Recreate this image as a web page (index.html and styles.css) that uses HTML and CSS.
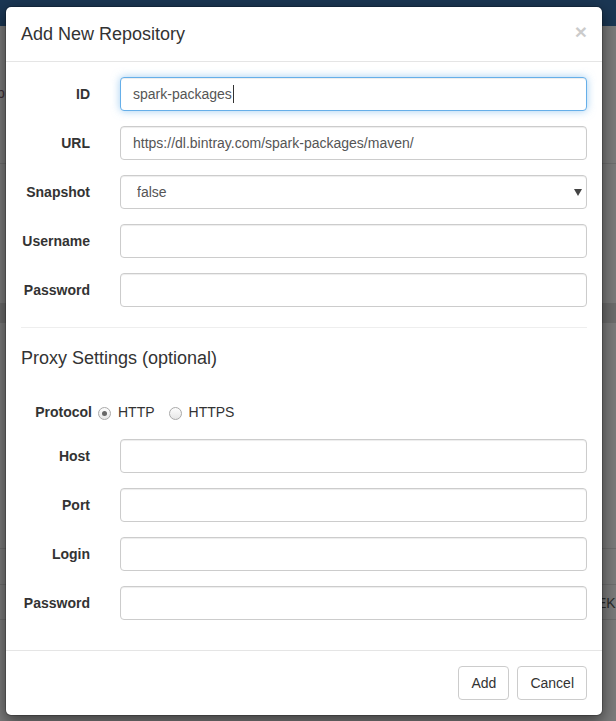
FILE: index.html
```html
<!DOCTYPE html>
<html>
<head>
<meta charset="utf-8">
<title>Add New Repository</title>
<link rel="stylesheet" href="styles.css">
</head>
<body>
<div class="backdrop">
  <div class="navbar"></div>
  <div class="bg-top"><span class="bg-p">p</span></div>
  <div class="bg-gap"></div>
  <div class="bg-band"></div>
  <div class="bg-gap2"></div>
  <div class="bg-row"></div>
  <div class="bg-row bg-row-text"><span class="bg-ek">EK</span></div>
</div>

<div class="modal">
  <div class="modal-header">
    <button class="close" type="button">×</button>
    <h4 class="modal-title">Add New Repository</h4>
  </div>
  <div class="modal-body">
    <div class="form-group">
      <label class="control-label">ID</label>
      <div class="input-wrap">
        <input class="form-control focused" type="text" value="spark-packages">
        <span class="caret"></span>
      </div>
    </div>
    <div class="form-group">
      <label class="control-label">URL</label>
      <input class="form-control" type="text" value="https://dl.bintray.com/spark-packages/maven/">
    </div>
    <div class="form-group">
      <label class="control-label">Snapshot</label>
      <div class="select-wrap">
        <select class="form-control select"><option>false</option><option>true</option></select>
      </div>
    </div>
    <div class="form-group">
      <label class="control-label">Username</label>
      <input class="form-control" type="text">
    </div>
    <div class="form-group">
      <label class="control-label">Password</label>
      <input class="form-control" type="password">
    </div>

    <hr class="divider">
    <h4 class="section-title">Proxy Settings (optional)</h4>

    <div class="protocol-row">
      <span class="protocol-label">Protocol</span>
      <span class="radio checked"></span><span class="radio-text">HTTP</span>
      <span class="radio"></span><span class="radio-text">HTTPS</span>
    </div>

    <div class="form-group">
      <label class="control-label">Host</label>
      <input class="form-control" type="text">
    </div>
    <div class="form-group">
      <label class="control-label">Port</label>
      <input class="form-control" type="text">
    </div>
    <div class="form-group">
      <label class="control-label">Login</label>
      <input class="form-control" type="text">
    </div>
    <div class="form-group">
      <label class="control-label">Password</label>
      <input class="form-control" type="password">
    </div>
  </div>
  <div class="modal-footer">
    <button class="btn" type="button">Add</button>
    <button class="btn" type="button">Cancel</button>
  </div>
</div>
</body>
</html>
```

FILE: styles.css
```css
* { box-sizing: border-box; }

html, body {
  margin: 0;
  padding: 0;
  width: 616px;
  height: 721px;
  overflow: hidden;
}

body {
  background: #7b7b7b;
  font-family: "Liberation Sans", Arial, sans-serif;
  font-size: 14px;
  line-height: 1.42857;
  color: #333;
  position: relative;
}

/* ---- dimmed page behind the modal ---- */
.backdrop { width: 616px; }

.navbar {
  height: 26px;
  background: #1b3754;
}

.bg-top {
  height: 138px;
  padding-top: 57px;
  border-bottom: 1px solid #6e6e6e;
  line-height: 20px;
}

.bg-p {
  display: inline-block;
  margin-left: -3px;
  color: #3b2d36;
}

.bg-gap { height: 139px; }

.bg-band {
  height: 20px;
  background: #6c6c6c;
}

.bg-gap2 {
  height: 226px;
  border-bottom: 1px solid #6e6e6e;
}

.bg-row {
  height: 36px;
  border-bottom: 1px solid #6e6e6e;
}

.bg-row-text {
  height: 35px;
  padding-top: 8px;
  padding-left: 597px;
  line-height: 20px;
}

.bg-ek { color: #2a2a2a; }

/* ---- modal ---- */
.modal {
  position: absolute;
  left: 5px;
  top: 6px;
  width: 598px;
  background: #fff;
  border: 1px solid rgba(0, 0, 0, 0.2);
  border-radius: 6px;
  box-shadow: 0 5px 15px rgba(0, 0, 0, 0.5);
  background-clip: padding-box;
}

.modal-header {
  padding: 15px;
  border-bottom: 1px solid #e5e5e5;
}

.modal-title {
  margin: 0;
  font-size: 18px;
  font-weight: normal;
  line-height: 24px;
  color: #333;
}

.close {
  float: right;
  margin-top: -1px;
  padding: 0;
  border: 0;
  background: transparent;
  font-family: "Liberation Sans", Arial, sans-serif;
  font-size: 21px;
  font-weight: bold;
  line-height: 1;
  color: #000;
  opacity: 0.2;
  text-shadow: 0 1px 0 #fff;
}

.modal-body {
  padding: 15px;
}

.form-group {
  display: grid;
  grid-template-columns: 69px 1fr;
  column-gap: 30px;
  margin-bottom: 15px;
}

.control-label {
  text-align: right;
  font-weight: bold;
  padding-top: 7px;
  line-height: 20px;
  color: #333;
}

.form-control {
  display: block;
  width: 100%;
  height: 34px;
  padding: 6px 12px;
  font-family: "Liberation Sans", Arial, sans-serif;
  font-size: 14px;
  line-height: 20px;
  color: #555;
  background: #fff;
  border: 1px solid #ccc;
  border-radius: 4px;
  box-shadow: inset 0 1px 1px rgba(0, 0, 0, 0.075);
  outline: none;
}

.form-control.focused {
  border-color: #66afe9;
  box-shadow: inset 0 1px 1px rgba(0, 0, 0, 0.075), 0 0 8px rgba(102, 175, 233, 0.6);
}

.input-wrap,
.select-wrap {
  position: relative;
}

.caret {
  position: absolute;
  left: 113px;
  top: 8px;
  width: 1px;
  height: 18px;
  background: #333;
}

.select {
  appearance: none;
  -webkit-appearance: none;
  padding-left: 16px;
}

.select-wrap::after {
  content: "";
  position: absolute;
  right: 5px;
  top: 14px;
  border-left: 4px solid transparent;
  border-right: 4px solid transparent;
  border-top: 7px solid #444;
}

.divider {
  margin: 20px 0;
  border: 0;
  border-top: 1px solid #eee;
}

.section-title {
  margin: 10px 0;
  font-size: 18px;
  font-weight: normal;
  line-height: 20px;
  color: #333;
}

.protocol-row {
  display: flex;
  align-items: center;
  height: 20px;
  margin-top: 35px;
  margin-bottom: 16px;
}

.protocol-label {
  width: 71px;
  text-align: right;
  font-weight: bold;
  margin-right: 6px;
}

.radio {
  width: 13px;
  height: 13px;
  border-radius: 50%;
  border: 1px solid #a9a9a9;
  background: linear-gradient(#fdfdfd, #e6e6e6);
  position: relative;
  flex: none;
}

.radio.checked::after {
  content: "";
  position: absolute;
  left: 3px;
  top: 3px;
  width: 5px;
  height: 5px;
  border-radius: 50%;
  background: #666;
}

.radio-text {
  margin-left: 7px;
  margin-right: 14px;
  color: #333;
}

.modal-footer {
  padding: 15px;
  text-align: right;
  border-top: 1px solid #e5e5e5;
  display: flex;
  justify-content: flex-end;
  gap: 8px;
}

.btn {
  height: 34px;
  padding: 6px 12px;
  font-family: "Liberation Sans", Arial, sans-serif;
  font-size: 14px;
  line-height: 20px;
  color: #333;
  background: #fff;
  border: 1px solid #ccc;
  border-radius: 4px;
}
```
